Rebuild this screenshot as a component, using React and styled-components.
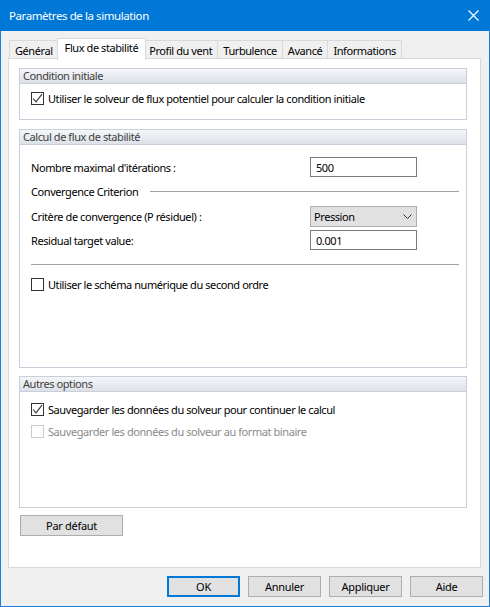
import styled, { createGlobalStyle } from 'styled-components'

const GlobalStyle = createGlobalStyle`
  html, body {
    margin: 0;
    padding: 0;
    background: #f0f0f0;
  }
  * {
    box-sizing: border-box;
  }
`

const Window = styled.div`
  width: 490px;
  height: 607px;
  border: 1px solid #1a7fd4;
  border-top: none;
  background: #f0f0f0;
  display: flex;
  flex-direction: column;
  font-family: 'Noto Sans', 'Open Sans', sans-serif;
  font-size: 11px;
  letter-spacing: -0.42px;
  color: #000;
`

const TitleBar = styled.div`
  height: 31px;
  margin: 0 -1px;
  background: #0078d7;
  color: #fff;
  display: flex;
  align-items: center;
  justify-content: space-between;
  padding: 0 11px 0 9px;
  font-size: 11.5px;
`

const Body = styled.div`
  flex: 1;
  display: flex;
  flex-direction: column;
  padding: 7px 6px 8px 7px;
`

const TabStrip = styled.div`
  display: flex;
  align-items: flex-end;
  height: 21px;
  padding-left: 1px;
  position: relative;
  z-index: 1;
`

const Tab = styled.div`
  height: ${(p) => (p.$active ? '22px' : '19px')};
  padding: 1px ${(p) => (p.$active ? '7px' : '5px')} 0;
  margin-right: ${(p) => (p.$active ? '-2px' : '0')};
  margin-left: ${(p) => (p.$first ? '0' : p.$active ? '-2px' : '-1px')};
  background: ${(p) => (p.$active ? '#fff' : '#f0f0f0')};
  border: 1px solid #d9d9d9;
  border-bottom: ${(p) => (p.$active ? 'none' : '1px solid #d9d9d9')};
  display: flex;
  align-items: ${(p) => (p.$active ? 'flex-start' : 'center')};
  white-space: nowrap;
  position: relative;
  z-index: ${(p) => (p.$active ? 2 : 1)};
  margin-bottom: ${(p) => (p.$active ? '-1px' : '0')};
`

const Panel = styled.div`
  width: 473px;
  height: 510px;
  margin-top: -1px;
  background: #fff;
  border: 1px solid #d9d9d9;
  padding: 9px 13px 0 10px;
  display: flex;
  flex-direction: column;
`

const Group = styled.div`
  border: 1px solid #c8cfda;
  margin-bottom: ${(p) => p.$gap || 0}px;
`

const GroupHeader = styled.div`
  height: 15px;
  line-height: 14px;
  padding-left: 3px;
  background: linear-gradient(#f5f6f9, #dde1e8);
  border-bottom: 1px solid #c8cfda;
  color: #404040;
`

const GroupBody = styled.div`
  height: ${(p) => p.$h}px;
  padding: ${(p) => p.$pt}px 7px 0 11px;
  display: flex;
  flex-direction: column;
`

const CheckRow = styled.label`
  display: flex;
  align-items: center;
  height: 13px;
  gap: 4px;
  margin-top: ${(p) => p.$mt || 0}px;
  color: ${(p) => (p.$disabled ? '#8a8a8a' : '#000')};
  white-space: nowrap;
`

const Box = styled.span`
  width: 13px;
  height: 13px;
  border: 1px solid ${(p) => (p.$disabled ? '#cccccc' : '#333')};
  background: #fff;
  display: flex;
  align-items: center;
  justify-content: center;
  flex-shrink: 0;
`

const FieldRow = styled.div`
  display: grid;
  grid-template-columns: 1fr 107px;
  align-items: center;
  margin-right: 42px;
  margin-top: ${(p) => p.$mt || 0}px;
`

const TextBox = styled.div`
  height: ${(p) => p.$h || 20}px;
  border: 1px solid #7a7a7a;
  background: #fff;
  padding-left: 5px;
  display: flex;
  align-items: center;
`

const Combo = styled.div`
  height: 21px;
  border: 1px solid #adadad;
  background: #e1e1e1;
  padding: 0 4px 0 3px;
  display: flex;
  align-items: center;
  justify-content: space-between;
`

const SectionTitle = styled.div`
  display: flex;
  align-items: center;
  gap: 12px;
  height: 14px;
  margin-top: ${(p) => p.$mt}px;
  white-space: nowrap;

  &::after {
    content: '';
    flex: 1;
    height: 1px;
    background: #a0a0a0;
  }
`

const Separator = styled.div`
  height: 1px;
  background: #a0a0a0;
  margin-top: ${(p) => p.$mt}px;
`

const Button = styled.button`
  width: ${(p) => p.$w || 73}px;
  height: 21px;
  border: ${(p) => (p.$default ? '2px solid #0078d7' : '1px solid #adadad')};
  background: #e1e1e1;
  font-family: inherit;
  font-size: 11px;
  letter-spacing: -0.3px;
  color: #000;
  padding: 0;
  margin: 0;
  margin-top: ${(p) => p.$mt || 0}px;
  margin-left: ${(p) => p.$ml || 0}px;
`

const ButtonBar = styled.div`
  display: flex;
  justify-content: flex-end;
  gap: 8px;
  margin-top: 8px;
`

const Check = () => (
  <svg width='11' height='11' viewBox='0 0 11 11'>
    <path d='M1 5.5 L4 8.8 L10 1.2' fill='none' stroke='#333' strokeWidth='1.1' />
  </svg>
)

const CheckBox = ({ checked, disabled, mt, children }) => (
  <CheckRow $mt={mt} $disabled={disabled}>
    <Box $disabled={disabled}>{checked && <Check />}</Box>
    {children}
  </CheckRow>
)

const tabs = ['Général', 'Flux de stabilité', 'Profil du vent', 'Turbulence', 'Avancé', 'Informations']

export default function App() {
  return (
    <>
      <GlobalStyle />
      <Window>
        <TitleBar>
          <span>Paramètres de la simulation</span>
          <svg width='11' height='11' viewBox='0 0 11 11'>
            <path d='M0.5 0.5 L10.5 10.5 M10.5 0.5 L0.5 10.5' stroke='#fff' strokeWidth='1.1' />
          </svg>
        </TitleBar>
        <Body>
          <TabStrip>
            {tabs.map((t, i) => (
              <Tab key={t} $active={i === 1} $first={i === 0}>
                {t}
              </Tab>
            ))}
          </TabStrip>
          <Panel>
            <Group $gap={9}>
              <GroupHeader>Condition initiale</GroupHeader>
              <GroupBody $h={35} $pt={8}>
                <CheckBox checked>
                  Utiliser le solveur de flux potentiel pour calculer la condition initiale
                </CheckBox>
              </GroupBody>
            </Group>

            <Group $gap={8}>
              <GroupHeader>Calcul de flux de stabilité</GroupHeader>
              <GroupBody $h={222} $pt={12}>
                <FieldRow>
                  <span>Nombre maximal d'itérations :</span>
                  <TextBox>500</TextBox>
                </FieldRow>
                <SectionTitle $mt={7}>Convergence Criterion</SectionTitle>
                <FieldRow $mt={8}>
                  <span>Critère de convergence (P résiduel) :</span>
                  <Combo>
                    Pression
                    <svg width='9' height='5' viewBox='0 0 9 5'>
                      <path d='M0.5 0.5 L4.5 4.5 L8.5 0.5' fill='none' stroke='#333' strokeWidth='1' />
                    </svg>
                  </Combo>
                </FieldRow>
                <FieldRow $mt={3}>
                  <span>Residual target value:</span>
                  <TextBox>0.001</TextBox>
                </FieldRow>
                <Separator $mt={14} />
                <CheckBox mt={13}>Utiliser le schéma numérique du second ordre</CheckBox>
              </GroupBody>
            </Group>

            <Group>
              <GroupHeader>Autres options</GroupHeader>
              <GroupBody $h={115} $pt={11}>
                <CheckBox checked>Sauvegarder les données du solveur pour continuer le calcul</CheckBox>
                <CheckBox disabled mt={9}>
                  Sauvegarder les données du solveur au format binaire
                </CheckBox>
              </GroupBody>
            </Group>

            <Button $w={103} $mt={7} $ml={1}>
              Par défaut
            </Button>
          </Panel>
          <ButtonBar>
            <Button $default>OK</Button>
            <Button>Annuler</Button>
            <Button>Appliquer</Button>
            <Button>Aide</Button>
          </ButtonBar>
        </Body>
      </Window>
    </>
  )
}
